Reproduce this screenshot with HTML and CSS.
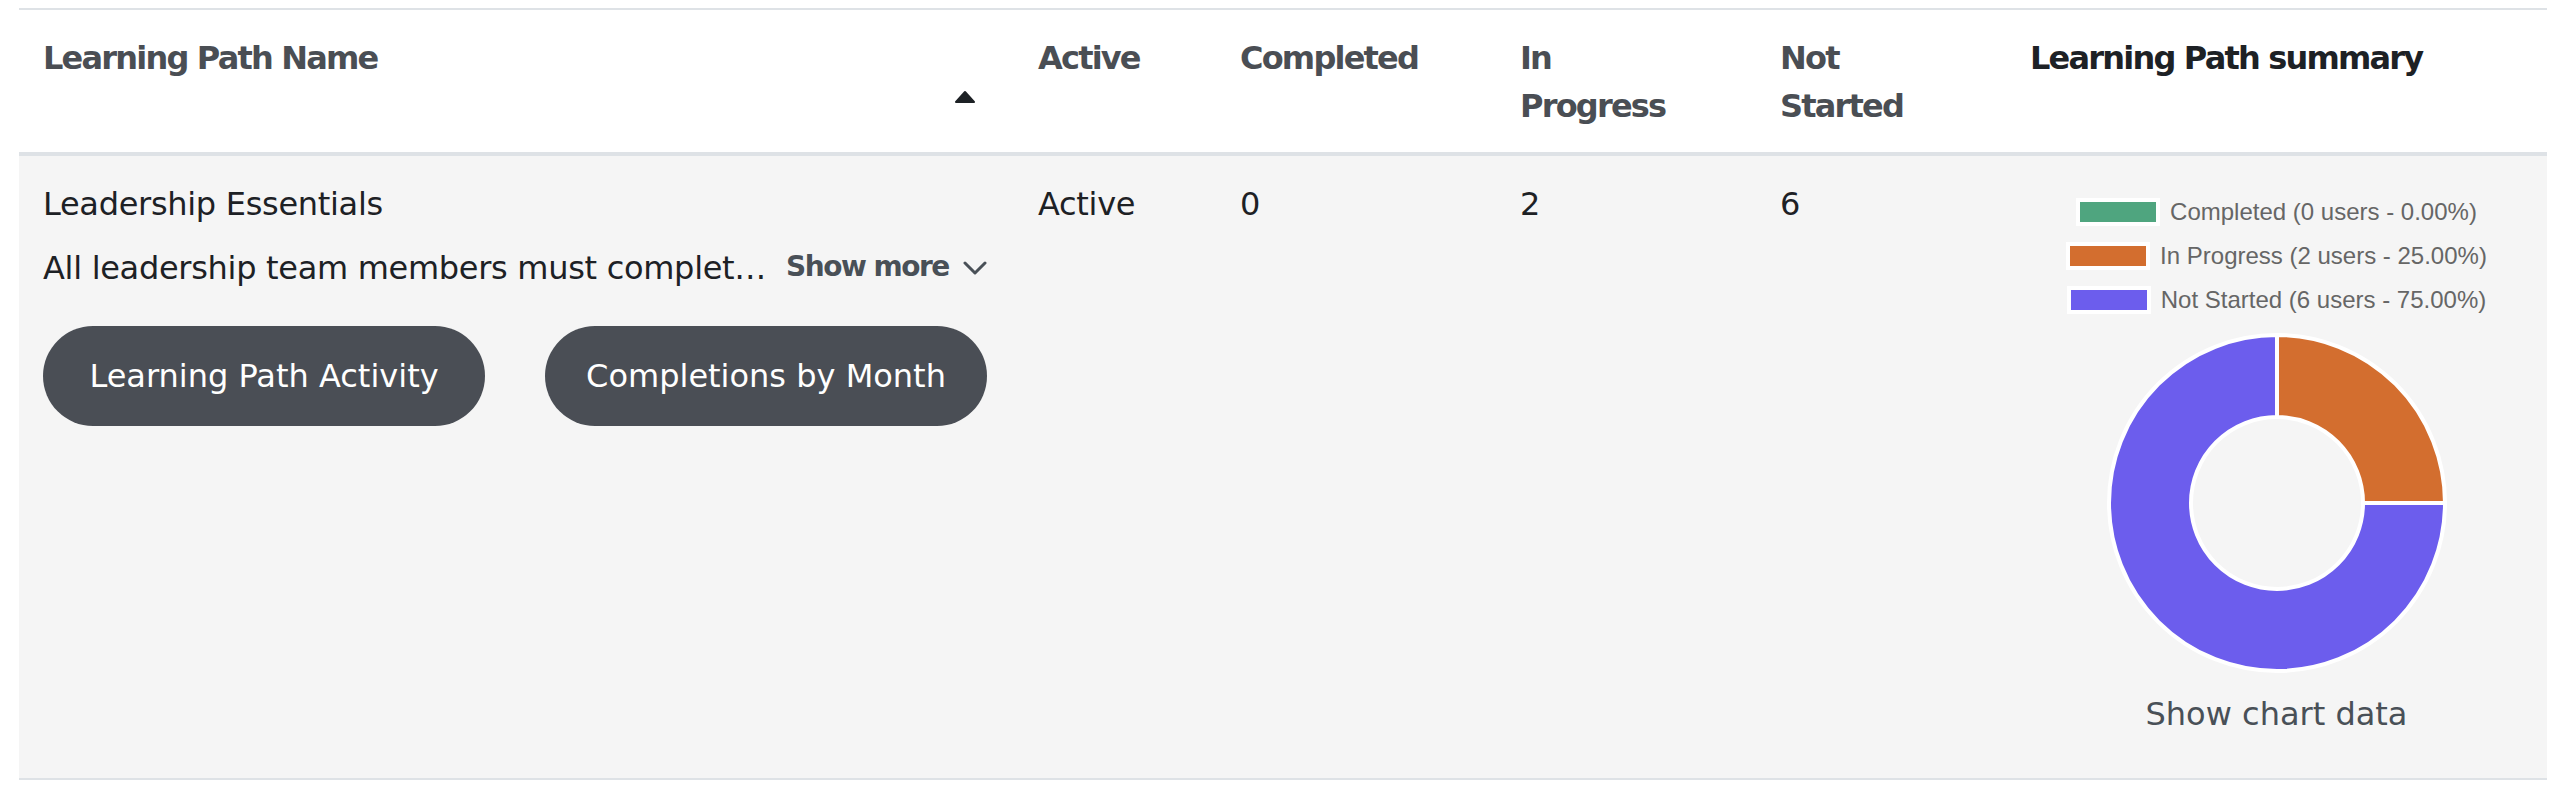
FILE: index.html
```html
<!DOCTYPE html>
<html lang="en">
<head>
  <meta charset="UTF-8" />
  <title>Learning Paths</title>
  <link rel="stylesheet" href="styles.css">
</head>
<body>
  <table class="lp-table">
    <colgroup>
      <col class="c-name">
      <col class="c-active">
      <col class="c-done">
      <col class="c-prog">
      <col class="c-todo">
      <col class="c-sum">
    </colgroup>
    <thead>
      <tr>
        <th>
          <div>Learning Path Name</div>
          <div class="sort-row">
            <svg class="caret" width="22" height="14" viewBox="0 0 22 14"><path d="M11 2 L20 12 L2 12 Z" fill="#1d2125" stroke="#1d2125" stroke-width="2" stroke-linejoin="round"/></svg>
          </div>
        </th>
        <th>Active</th>
        <th>Completed</th>
        <th>In<br>Progress</th>
        <th>Not<br>Started</th>
        <th class="th-sum">Learning Path summary</th>
      </tr>
    </thead>
    <tbody>
      <tr>
        <td>
          <div class="lp-title">Leadership Essentials</div>
          <div class="lp-desc">
            <span>All leadership team members must complet…</span>
            <a class="show-more" href="#">Show more
              <svg width="24" height="14" viewBox="0 0 24 14"><polyline points="2,2 12,12 22,2" fill="none" stroke="#495057" stroke-width="3" stroke-linecap="round" stroke-linejoin="round"/></svg>
            </a>
          </div>
          <div class="lp-actions">
            <button class="btn-pill">Learning Path Activity</button>
            <button class="btn-pill">Completions by Month</button>
          </div>
        </td>
        <td>Active</td>
        <td>0</td>
        <td>2</td>
        <td>6</td>
        <td class="td-sum">
          <div class="chart">
            <div class="legend">
              <div class="legend-row"><span class="swatch sw-done"></span><span>Completed (0 users - 0.00%)</span></div>
              <div class="legend-row"><span class="swatch sw-prog"></span><span>In Progress (2 users - 25.00%)</span></div>
              <div class="legend-row"><span class="swatch sw-todo"></span><span>Not Started (6 users - 75.00%)</span></div>
            </div>
            <svg class="donut" width="340" height="340" viewBox="0 0 340 340">
              <path d="M338 170 A168 168 0 1 1 170 2 L170 84 A86 86 0 1 0 256 170 Z" fill="#6c5ded" stroke="#ffffff" stroke-width="4"/>
              <path d="M170 2 A168 168 0 0 1 338 170 L256 170 A86 86 0 0 0 170 84 Z" fill="#d36e2f" stroke="#ffffff" stroke-width="4"/>
            </svg>
            <a class="chart-data" href="#">Show chart data</a>
          </div>
        </td>
      </tr>
    </tbody>
  </table>
</body>
</html>
```

FILE: styles.css
```css
body {
  margin: 0;
  background: #ffffff;
  font-family: "DejaVu Sans", sans-serif;
  font-size: 32px;
  color: #1d2125;
}

.lp-table {
  border-collapse: separate;
  border-spacing: 0;
  table-layout: fixed;
  width: 2528px;
  margin: 8px 0 0 19px;
}

.c-name { width: 995px; }
.c-active { width: 202px; }
.c-done { width: 280px; }
.c-prog { width: 260px; }
.c-todo { width: 250px; }
.c-sum { width: 541px; }

.lp-table th {
  border-top: 2px solid #dee2e6;
  border-bottom: 4px solid #dee2e6;
  padding: 24px 24px 22px;
  text-align: left;
  vertical-align: top;
  font-weight: 700;
  letter-spacing: -1.8px;
  line-height: 48px;
  color: #4a4e54;
}

.lp-table th.th-sum {
  color: #1d2125;
}

.sort-row {
  display: flex;
  justify-content: flex-end;
  height: 48px;
  padding: 8px 14px 0 0;
  box-sizing: border-box;
}

.lp-table td {
  background: #f5f5f5;
  padding: 24px;
  vertical-align: top;
  border-bottom: 2px solid #dee2e6;
  line-height: 48px;
  letter-spacing: -0.3px;
}

.lp-desc {
  margin-top: 16px;
  display: flex;
  align-items: baseline;
  white-space: nowrap;
}

.show-more {
  margin-left: 20px;
  color: #495057;
  font-size: 28px;
  font-weight: 700;
  letter-spacing: -1.5px;
  text-decoration: none;
  position: relative;
  top: -3px;
}

.show-more svg {
  margin-left: 6px;
  vertical-align: middle;
}

.lp-actions {
  margin-top: 32px;
  display: flex;
  gap: 60px;
}

.btn-pill {
  width: 442px;
  height: 100px;
  border: none;
  border-radius: 50px;
  background: #4a4e55;
  color: #ffffff;
  font-family: inherit;
  font-size: 32px;
  letter-spacing: 0;
}

.lp-table td.td-sum {
  padding-bottom: 40px;
}

.chart {
  display: flex;
  flex-direction: column;
  align-items: center;
}

.legend {
  padding-top: 10px;
  font-family: "Liberation Sans", Arial, sans-serif;
  font-size: 24px;
  letter-spacing: 0;
  color: #666666;
}

.legend-row {
  display: flex;
  align-items: center;
  justify-content: center;
  height: 44px;
}

.swatch {
  width: 76px;
  height: 20px;
  border: 4px solid #ffffff;
  margin-right: 10px;
}

.sw-done { background: #4fa57f; }
.sw-prog { background: #d36e2f; }
.sw-todo { background: #6c5ded; }

.donut {
  margin-top: 11px;
}

.chart-data {
  margin-top: 17px;
  color: #495057;
  text-decoration: none;
  letter-spacing: 0;
}
```
